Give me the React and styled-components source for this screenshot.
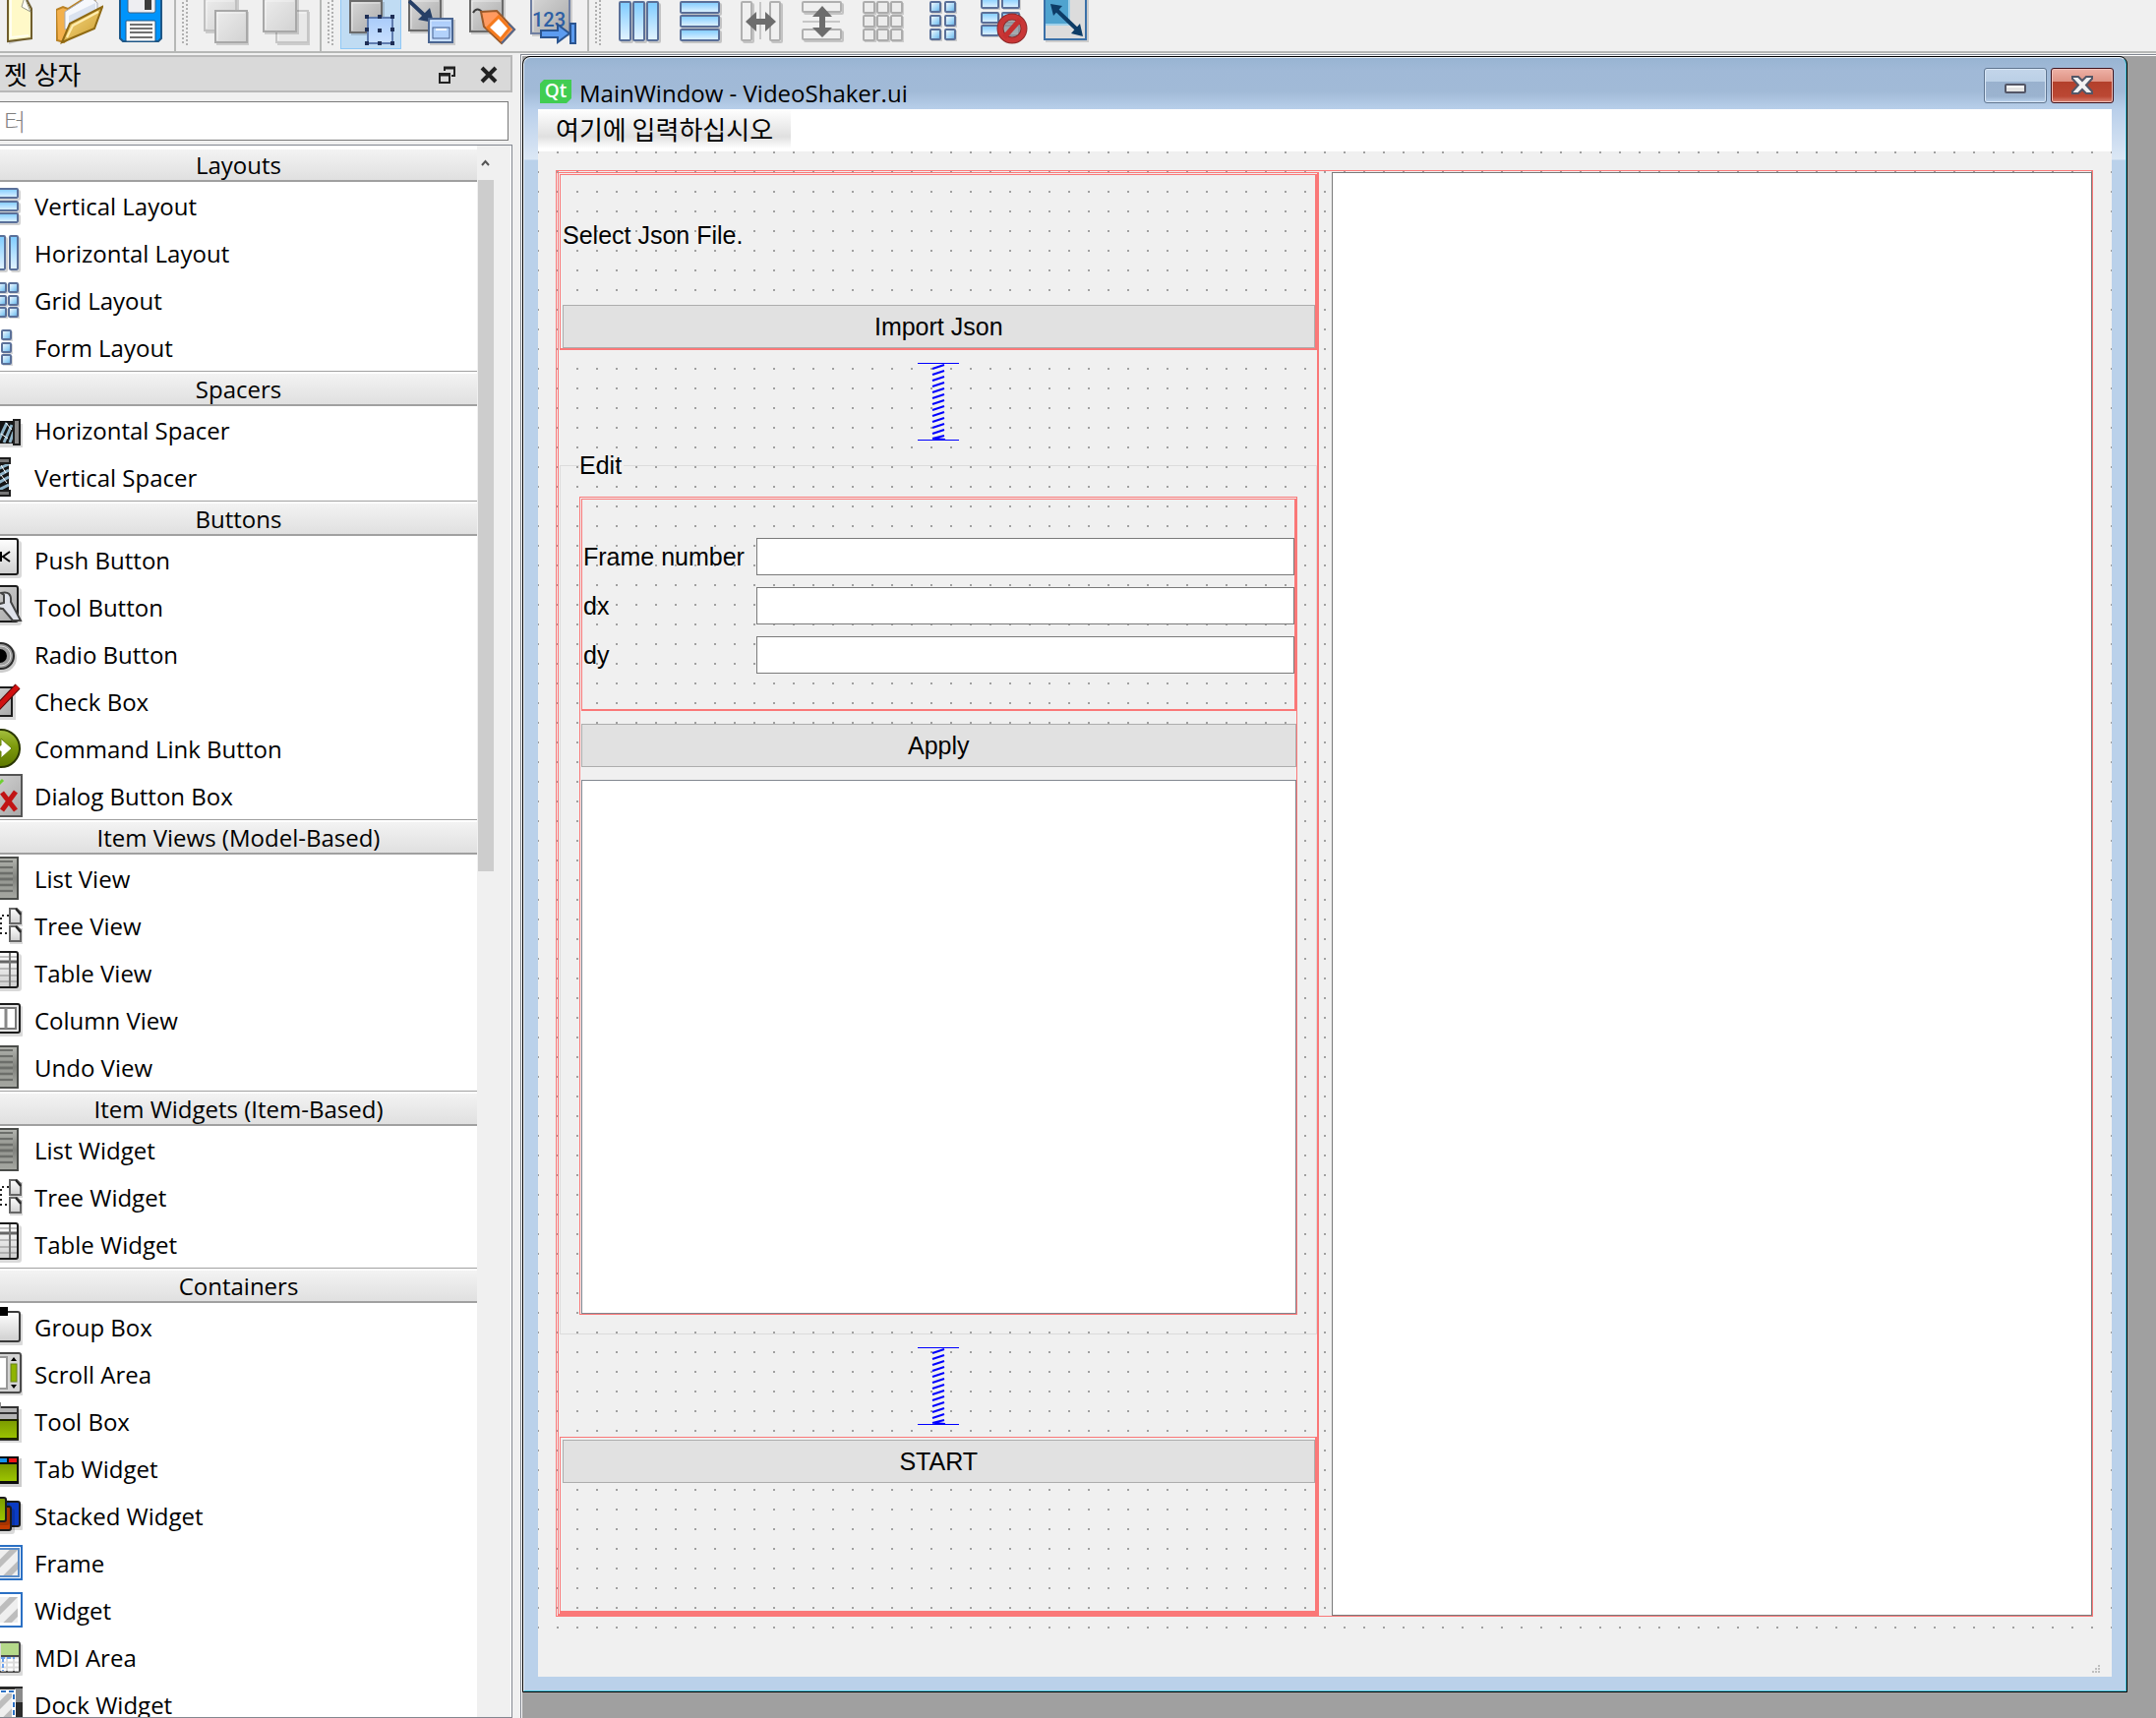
import { Fragment } from 'react';
import styled, { createGlobalStyle } from 'styled-components';

const GlobalStyle = createGlobalStyle`
  * {
    box-sizing: border-box;
  }

  body {
    margin: 0;
    background: #f0f0f0;
    color: #000;
    font-family: 'Open Sans', 'Noto Sans CJK KR', sans-serif;
    font-size: 24px;
    line-height: 32px;
  }
`;

const red = '#fa7878';

const Designer = styled.div`
  display: flex;
  flex-direction: column;
  height: 100vh;
  overflow: hidden;
`;

/* ---------- toolbar ---------- */

const ToolBars = styled.header`
  display: flex;
  flex: none;
`;

const ToolBar = styled.div`
  display: flex;
  align-items: flex-start;
  flex: ${props => (props.$grow ? '1' : 'none')};
  justify-content: ${props => (props.$clipped ? 'flex-end' : 'flex-start')};
  width: ${props => (props.$clipped ? '179px' : 'auto')};
  height: 54px;
  padding: 0 3px 0 ${props => (props.$clipped ? '0' : '6px')};
  overflow: hidden;
  border-right: ${props => (props.$grow ? 'none' : '2px solid #b6b8b6')};
  border-bottom: 2px solid #b6b8b6;
  background: #f0f0f0;
`;

const Grip = styled.span`
  flex: none;
  width: 6px;
  height: 46px;
  margin-right: 7px;
  background-image:
    conic-gradient(from 270deg at 2px 2px, #b0b0b0 90deg, transparent 0),
    conic-gradient(from 270deg at 2px 2px, #b0b0b0 90deg, transparent 0);
  background-size: 6px 4px;
  background-position: 0 2px, 4px 0;
`;

const ToolButton = styled.button`
  display: flex;
  justify-content: center;
  flex: none;
  width: 62px;
  height: 50px;
  padding: 0;
  border: 1px solid ${props => (props.$active ? '#90c8f6' : 'transparent')};
  border-top: none;
  background: ${props => (props.$active ? '#c0dcf3' : 'transparent')};
`;

/* ---------- widget box ---------- */

const Body = styled.div`
  display: flex;
  flex: 1;
  min-height: 0;
`;

const Dock = styled.aside`
  display: flex;
  flex-direction: column;
  flex: none;
  width: 521px;
  margin-right: 8px;
  padding-top: 2px;
`;

const DockTitle = styled.div`
  display: flex;
  align-items: center;
  flex: none;
  height: 38px;
  padding: 2px 13px 0 4px;
  border: 2px solid #b8b8b8;
  border-left: none;
  background: #d9d9d9;
  font-size: 26px;
  font-weight: 400;

  h2 {
    flex: 1;
    margin: 0;
    font: inherit;
  }

  button {
    display: flex;
    margin-left: 24px;
    padding: 0;
    border: none;
    background: none;
  }
`;

const Filter = styled.input`
  flex: none;
  width: 517px;
  height: 40px;
  margin: 9px 0 4px;
  padding: 0 4px 2px;
  border: 1px solid #7a7a7a;
  border-left: none;
  background: #fff;
  font-family: 'Noto Sans CJK KR', sans-serif;
  font-size: 24px;
  font-weight: 300;

  &::placeholder {
    color: #7f7f7f;
    opacity: 1;
  }
`;

const Tree = styled.div`
  display: flex;
  flex: 1;
  min-height: 0;
  border: 1px solid #828790;
  border-left: none;
  background: #fff;
`;

const TreeList = styled.div`
  flex: 1;
  overflow: hidden;
  padding-top: 1px;
`;

const Category = styled.h3`
  height: 36px;
  margin: 0;
  padding-top: 3px;
  border-top: 1px solid #a0a0a0;
  border-bottom: 2px solid #a0a0a0;
  background: linear-gradient(#f4f4f4, #e0e0e0);
  box-shadow: inset 0 2px #fff;
  font-size: 24px;
  font-weight: 400;
  line-height: 30px;
  text-align: center;

  &:first-child {
    border-top-color: #fff;
  }
`;

const Items = styled.ul`
  margin: 0;
  padding: 0;
  list-style: none;
`;

const Item = styled.li`
  display: flex;
  align-items: center;
  gap: 12px;
  height: 48px;

  svg {
    flex: none;
  }

  span {
    padding-top: 2px;
  }
`;

const ScrollBar = styled.div`
  display: flex;
  flex-direction: column;
  flex: none;
  width: 35px;
  border-right: 1px solid #fff;
  background: #f0f0f0;

  svg {
    flex: none;
    margin: 14px 4px 13px;
  }
`;

const Thumb = styled.div`
  width: 16px;
  height: 44%;
  margin-left: 1px;
  background: #cdcdcd;
`;

/* ---------- form window ---------- */

const MdiArea = styled.main`
  display: flex;
  flex: 1;
  margin-top: 1px;
  padding: 1px 29px 26px 1px;
  border: 1px solid #828790;
  border-width: 1px 0 0 1px;
  background: #a0a0a0;
  box-shadow: inset 1px 1px #fff;
`;

const FormWindow = styled.section`
  display: flex;
  flex: 1;
  border: 1px solid #000;
  border-radius: 8px 8px 0 0;
  background: #000;
`;

const Frame = styled.div`
  display: flex;
  flex-direction: column;
  flex: 1;
  padding: 0 14px 14px;
  border: 1px solid;
  border-color: #eaf3fb #44c3da #44c3da #eaf3fb;
  border-radius: 7px 7px 0 0;
  background: linear-gradient(
    #98b4d2 0, #a0b9d7 12px, #a1bad7 34px, #b8cfea 52px,
    #b9cfea 52px, #dbe7f5 103px, #bad1ea 104px
  );
`;

const TitleBar = styled.div`
  display: flex;
  align-items: flex-end;
  height: 52px;
  padding-left: 2px;

  > svg {
    margin-bottom: 6px;
  }

  h1 {
    flex: 1;
    margin: 0;
    padding-left: 8px;
    font-size: 24px;
    font-weight: 400;
    line-height: 32px;
  }
`;

const CaptionButtons = styled.div`
  display: flex;
  gap: 4px;
  align-self: flex-start;
  margin-right: -2px;
  padding-top: 10px;
`;

const CaptionButton = styled.button`
  display: flex;
  align-items: center;
  justify-content: center;
  width: 64px;
  height: 36px;
  padding: 0;
  border: 1px solid ${props => (props.$close ? '#40121c' : '#5f7590')};
  border-radius: 3px;
  background: ${props =>
    props.$close
      ? 'linear-gradient(#eeb2a7 0, #de9283 13px, #b3402b 13px, #bb4733 28px, #d98272 34px)'
      : 'linear-gradient(#c3d5ea 0, #bbd0e6 13px, #99b1ce 13px, #9bb3cf 28px, #bcd3ee 34px)'};
  box-shadow: inset 0 0 0 1px ${props => (props.$close ? '#f0c0b8' : '#d9e7f6')};
`;

const MenuBar = styled.nav`
  display: flex;
  flex: none;
  height: 43px;
  background: #fff;
`;

const MenuItem = styled.button`
  height: 40px;
  padding: 0 18px;
  border: none;
  background: linear-gradient(#fff 0, #e0e0e0 28px, #fff 40px);
  font-family: 'Noto Sans CJK KR', sans-serif;
  font-size: 26px;
  line-height: 40px;
`;

const Client = styled.div`
  display: flex;
  flex-direction: column;
  flex: 1;
  background: #f0f0f0;
`;

const Central = styled.div`
  display: flex;
  flex: 1;
  padding: 19px 19px 16px 18px;
  background-image: conic-gradient(from 270deg at 2px 2px, #a0a0a0 90deg, transparent 0);
  background-size: 20px 20px;
  background-position: -1px 0;
`;

const StatusBar = styled.div`
  display: flex;
  align-items: flex-end;
  justify-content: flex-end;
  flex: none;
  height: 45px;
  padding: 0 12px 4px;
  background: #f0f0f0;
`;

const Columns = styled.div`
  display: grid;
  grid-template-columns: 1fr 1fr;
  gap: 13px;
  flex: 1;
  padding: 1px 0 0 1px;
  border: 1px solid ${red};
`;

const GraphicsView = styled.div`
  border: 1px solid #7a7a7a;
  background: #fff;
`;

const FormFont = styled.div`
  display: flex;
  flex-direction: column;
  gap: 12px;
  padding: 1px 0 0 1px;
  border: 1px solid ${red};
  border-width: 1px 2px 2px 1px;
  font-family: 'Liberation Sans', sans-serif;
  font-size: 25px;
  line-height: 26px;
`;

const VBox = styled.div`
  display: flex;
  flex-direction: column;
  gap: 12px;
  height: ${props => props.$height};
  padding: 2px 0 0 2px;
  border: 1px solid ${red};
  border-width: 1px 2px ${props => props.$bottom || '2px'} 1px;
`;

const Label = styled.div`
  display: flex;
  align-items: center;
  flex: 1;
`;

const PushButton = styled.button`
  flex: none;
  height: 44px;
  padding: 0;
  border: 1px solid #adadad;
  background: #e1e1e1;
  color: #000;
  font: inherit;
`;

const SpacerBox = styled.div`
  display: flex;
  justify-content: center;
  height: 80px;
`;

const GroupBox = styled.fieldset`
  display: flex;
  flex: 1;
  min-width: 0;
  margin: 0;
  padding: 19px;
  border: 1px solid #dcdcdc;

  legend {
    padding: 0 2px 0 0;
  }
`;

const GroupLayout = styled.div`
  display: flex;
  flex-direction: column;
  gap: 13px;
  flex: 1;
  padding: 1px 0 0 1px;
  border: 1px solid ${red};
`;

const FormLayout = styled.div`
  display: grid;
  grid-template-columns: 164px 1fr;
  gap: 12px;
  align-items: center;
  padding: 39px 0 36px 1px;
  border: 1px solid ${red};
  border-width: 1px 2px 2px 1px;
`;

const LineEdit = styled.input`
  width: 100%;
  height: 38px;
  padding: 0 6px;
  border: 1px solid #7a7a7a;
  background: #fff;
  font: inherit;
`;

const TextEdit = styled.textarea`
  display: block;
  flex: 1;
  border: 1px solid #828790;
  background: #fff;
  resize: none;
  outline: none;
  font: inherit;
`;

/* ---------- icons ---------- */

const HiddenSvg = styled.svg`
  position: absolute;
`;

const Gradients = () => (
  <HiddenSvg width="0" height="0" aria-hidden="true">
    <defs>
      <linearGradient id="bar" x1="0" y1="0" x2="0" y2="1">
        <stop offset="0" stopColor="#7ecbff" />
        <stop offset="1" stopColor="#e4f4ff" />
      </linearGradient>
      <linearGradient id="cell" x1="0" y1="0" x2="1" y2="1">
        <stop offset="0" stopColor="#fff" />
        <stop offset="0.7" stopColor="#8fcdf5" />
        <stop offset="1" stopColor="#5f9dcb" />
      </linearGradient>
      <linearGradient id="grey" x1="0" y1="0" x2="1" y2="1">
        <stop offset="0" stopColor="#d8d8d8" />
        <stop offset="1" stopColor="#a9a9a9" />
      </linearGradient>
      <linearGradient id="pale" x1="0" y1="0" x2="1" y2="1">
        <stop offset="0" stopColor="#ececec" />
        <stop offset="1" stopColor="#d2d2d2" />
      </linearGradient>
      <linearGradient id="white" x1="0" y1="0" x2="0" y2="1">
        <stop offset="0" stopColor="#fff" />
        <stop offset="1" stopColor="#cfcfcf" />
      </linearGradient>
      <linearGradient id="blue" x1="0" y1="0" x2="0" y2="1">
        <stop offset="0" stopColor="#a9cbfa" />
        <stop offset="1" stopColor="#c9e0ff" />
      </linearGradient>
      <linearGradient id="green" x1="0" y1="0" x2="0" y2="1">
        <stop offset="0" stopColor="#7b9a00" />
        <stop offset="1" stopColor="#9cc400" />
      </linearGradient>
      <linearGradient id="olive" x1="0" y1="0" x2="0" y2="1">
        <stop offset="0" stopColor="#a5c040" />
        <stop offset="0.45" stopColor="#7d9a0c" />
        <stop offset="1" stopColor="#5d7800" />
      </linearGradient>
      <linearGradient id="folder" x1="0" y1="0" x2="1" y2="1">
        <stop offset="0" stopColor="#fbe08a" />
        <stop offset="1" stopColor="#c9982a" />
      </linearGradient>
      <linearGradient id="list" x1="0" y1="0" x2="0" y2="1">
        <stop offset="0" stopColor="#b4b6b0" />
        <stop offset="0.5" stopColor="#80827d" />
        <stop offset="1" stopColor="#a8aaa4" />
      </linearGradient>
      <pattern id="hatch" width="14" height="14" patternUnits="userSpaceOnUse" patternTransform="rotate(45)">
        <rect width="14" height="14" fill="#efefef" />
        <rect width="6" height="14" fill="#bdbdbd" />
      </pattern>
    </defs>
  </HiddenSvg>
);

const Bars = ({ vertical, tops, from, length, size, fill = 'url(#bar)', stroke = '#5a7099' }) =>
  tops.map(t => {
    const box = vertical
      ? { x: t + 1, y: from + 1, width: size - 2, height: length - 2 }
      : { x: from + 1, y: t + 1, width: length - 2, height: size - 2 };
    return (
      <g key={t}>
        <rect {...box} x={box.x + 2} y={box.y + 2} rx="1" fill="none" stroke="#000" strokeOpacity="0.18" strokeWidth="2" />
        <rect {...box} rx="1" fill={fill} stroke={stroke} strokeWidth="2" />
      </g>
    );
  });

const Cells = ({ xs, ys, w, h, fill = 'url(#cell)', stroke = '#5a7099' }) =>
  ys.map(y =>
    xs.map(x => (
      <g key={`${x}-${y}`}>
        <rect x={x + 2} y={y + 2} width={w - 1} height={h - 1} fill="#000" fillOpacity="0.15" />
        <rect x={x + 1} y={y + 1} width={w - 2} height={h - 2} rx="1" fill={fill} stroke={stroke} strokeWidth="2" />
      </g>
    ))
  );

const Square = ({ x, y, s, fill = 'url(#grey)', stroke = '#6b6b6b' }) => (
  <>
    <rect x={x + 2} y={y + 2} width={s} height={s} fill="#000" fillOpacity="0.15" />
    <rect x={x + 1} y={y + 1} width={s - 2} height={s - 2} fill={fill} stroke={stroke} strokeWidth="2" />
    <path d={`M${x + 3} ${y + s - 3}V${y + 3}H${x + s - 3}`} fill="none" stroke="#fff" strokeOpacity="0.6" />
  </>
);

const toolIcons = {
  newFile: (
    <>
      <path d="M14 -4H32L38 8V38L14 45Z" fill="#000" fillOpacity="0.15" />
      <path d="M13 -4H30L37 9V39L13 42Z" fill="#fff9c8" stroke="#6f5d2c" strokeWidth="2" />
      <path d="M30 -3L27 7L36 12Z" fill="#fdfdf5" stroke="#9a9a88" />
      <path d="M16 0V38L34 36" fill="none" stroke="#fffef0" strokeWidth="2" />
    </>
  ),
  open: (
    <>
      <path d="M1 41L0 10L7 7L12 9L36 -6L40 2V20L8 43Z" fill="#f3b04c" stroke="#b98226" strokeWidth="2" />
      <path d="M9 30V12L34 -4L42 3V20Z" fill="#f6f8fc" stroke="#a5a9b5" />
      <path d="M13 28V16L40 3V14Z" fill="#dbe3f0" />
      <path d="M6 43L14 24L47 7L39 29Z" fill="url(#folder)" stroke="#8f6a14" strokeWidth="2" />
      <path d="M11 38L17 26L43 12" fill="none" stroke="#ffedb0" strokeWidth="2" />
    </>
  ),
  save: (
    <>
      <path d="M3 -4H45V39L42 42H6L3 39Z" fill="#0094fb" stroke="#1e5787" strokeWidth="2" />
      <path d="M11 -4H39V11Q39 13 37 13H13Q11 13 11 11Z" fill="#eeeef2" stroke="#3a6387" />
      <rect x="28" y="-2" width="7" height="12" fill="#3c3c3c" />
      <rect x="9" y="21" width="30" height="21" rx="1" fill="#fbfbfb" stroke="#1e5787" />
      <path d="M13 25H36M13 29H36M13 33H36M13 38H36" stroke="#707070" strokeWidth="2" />
    </>
  ),
  sendBack: (
    <>
      <Square x={2} y={-2} s={34} fill="url(#pale)" stroke="#c0c0c0" />
      <Square x={13} y={10} s={34} fill="url(#pale)" stroke="#a8a8a8" />
    </>
  ),
  bringFront: (
    <>
      <Square x={13} y={10} s={34} fill="#e8e8e8" stroke="#c6c6c6" />
      <Square x={0} y={-2} s={35} fill="url(#pale)" stroke="#a8a8a8" />
    </>
  ),
  editWidgets: (
    <>
      <Square x={2} y={0} s={34} />
      <rect x="21" y="18" width="25" height="26" fill="url(#blue)" stroke="#5f7cae" strokeWidth="2" />
      {[[18, 15], [31, 15], [44, 15], [18, 28], [44, 28], [18, 42], [31, 42], [44, 42], [31, 29]].map(([x, y]) => (
        <rect key={`${x}-${y}`} x={x} y={y} width="4" height="4" fill="#1f2f55" />
      ))}
    </>
  ),
  editSignals: (
    <>
      <Square x={0} y={-2} s={34} />
      <path d="M1 1L17 16" stroke="#263f66" strokeWidth="4" />
      <path d="M26 23L10 20L22 8Z" fill="#263f66" />
      <Square x={20} y={18} s={26} fill="url(#blue)" stroke="#4a6591" />
      <rect x="25" y="28" width="17" height="11" fill="#b3d2fb" stroke="#4a6591" />
      <path d="M28 30H39" stroke="#fff" strokeWidth="2" />
    </>
  ),
  editBuddies: (
    <>
      <Square x={0} y={-2} s={35} />
      <path d="M4 13Q8 6 14 13" fill="none" stroke="#3c3c3c" strokeWidth="2" />
      <path d="M12 12L28 11L46 30L33 44L15 27Z" fill="#ff9a60" stroke="#9a5a2a" strokeWidth="2" />
      <path d="M33 44L46 30L40 24" fill="none" stroke="#566a8f" strokeWidth="2" />
      <path d="M30 17L41 29L32 40L19 28Z" fill="#fff" stroke="#f57a1d" strokeWidth="3" />
    </>
  ),
  tabOrder: (
    <>
      <Square x={0} y={-6} s={41} fill="url(#grey)" stroke="#6f7fa2" />
      <text x="2" y="27" fontFamily="Roboto, sans-serif" fontSize="20" fontWeight="500" fill="#2d5fa4">
        123
      </text>
      <path d="M11 31H28V25L40 34L28 43V38H11Z" fill="#5c9cf0" stroke="#2b5590" strokeWidth="2" />
      <rect x="41" y="24" width="5" height="20" fill="#5c9cf0" stroke="#2b5590" strokeWidth="2" />
    </>
  ),
  layoutH: <Bars vertical tops={[4, 18, 32]} from={1} length={41} size={13} />,
  layoutV: <Bars tops={[1, 15, 29]} from={4} length={41} size={13} />,
  splitH: (
    <>
      <Bars vertical tops={[4, 33]} from={1} length={41} size={12} fill="#f0f0f0" stroke="#b0b0b0" />
      <path d="M24 2V40" stroke="#c6c6c6" strokeWidth="2" />
      <path d="M9 22L20 12V19H29V12L40 22L29 32V25H20V32Z" fill="#6d6d6d" />
    </>
  ),
  splitV: (
    <>
      <Bars tops={[1, 29]} from={4} length={41} size={12} fill="#f0f0f0" stroke="#b0b0b0" />
      <path d="M5 22H43" stroke="#c6c6c6" strokeWidth="2" />
      <path d="M25 6L35 17H28V28H35L25 38L15 28H22V17H15Z" fill="#6d6d6d" />
    </>
  ),
  grid: <Cells xs={[4, 18, 32]} ys={[1, 15, 29]} w={13} h={13} fill="#ececec" stroke="#acacac" />,
  form: <Cells xs={[10, 25]} ys={[1, 15, 29]} w={12} h={12} />,
  breakLayout: (
    <>
      <Cells xs={[0, 21]} ys={[-3, 12, 25]} w={19} h={12} fill="url(#bar)" />
      <circle cx="32" cy="29" r="12" fill="#9b9b9b" fillOpacity="0.8" stroke="#8c2a2a" strokeWidth="7" />
      <circle cx="32" cy="29" r="12" fill="none" stroke="#c93636" strokeWidth="5" />
      <path d="M24 38L40 20" stroke="#c53030" strokeWidth="5" />
    </>
  ),
  adjustSize: (
    <>
      <rect x="4" y="-4" width="44" height="47" fill="#000" fillOpacity="0.15" />
      <rect x="3" y="-4" width="42" height="44" fill="#dcdcdc" stroke="#3a70a8" strokeWidth="2" />
      <path d="M4 -4H28V25H4Z" fill="#4fa3cf" />
      <path d="M4 25H28V-4" fill="none" stroke="#9fd0ea" strokeWidth="2" />
      <path d="M14 9L36 30" stroke="#0d3c66" strokeWidth="4" />
      <path d="M9 4L21 6L12 16Z" fill="#0d3c66" />
      <path d="M42 37L30 34L39 24Z" fill="#0d3c66" />
    </>
  ),
};

const ToolIcon = ({ name }) => (
  <svg width="48" height="46" viewBox="0 0 48 46" aria-hidden="true">
    {toolIcons[name]}
  </svg>
);

const Slab = ({ x = 0, y, r, b, fill = 'url(#white)', stroke = '#1c1c1c' }) => (
  <>
    <rect x={x} y={y + 3} width={r - x + 3} height={b - y} rx="3" fill="#000" fillOpacity="0.15" />
    <rect x={x} y={y + 1} width={r - x - 1} height={b - y - 2} rx="2" fill={fill} stroke={stroke} strokeWidth="2" />
  </>
);

const listIcon = (
  <>
    <rect x="1" y="1" width="38" height="42" fill="url(#list)" stroke="#4b4d4a" strokeWidth="2" />
    <path d="M4 5H34M4 11H34M4 17H34M4 23H34M4 29H34M4 35H34" stroke="#6c6e6a" strokeWidth="2" />
    <path d="M4 8H34M4 14H34M4 20H34M4 26H34M4 32H34M4 38H34" stroke="#a6a8a2" strokeWidth="1" />
  </>
);

const treeIcon = (
  <>
    <path d="M30 12H22V30H30" fill="none" stroke="#222" strokeWidth="2" strokeDasharray="2 3" />
    {[4, 22].map(y => (
      <g key={y}>
        <rect x="31" y={y + 3} width="14" height="16" fill="#000" fillOpacity="0.15" />
        <path d={`M31 ${y + 1}H38L42 ${y + 5}V${y + 16}H31Z`} fill="url(#white)" stroke="#666" strokeWidth="2" />
        <path d={`M37 ${y + 1}L42 ${y + 7}`} stroke="#222" strokeWidth="2" />
      </g>
    ))}
  </>
);

const tableIcon = (
  <>
    <Slab y={0} r={40} b={38} />
    <path d="M2 11H38" stroke="#666" strokeWidth="3" />
    <path d="M2 6H38M2 18H38M2 25H38M2 31H38" stroke="#888" strokeWidth="1" />
    <path d="M31 2V36" stroke="#777" strokeWidth="2" />
  </>
);

const hatchIcon = inner => (
  <>
    <rect x="1" y="5" width="42" height="34" fill="#fff" stroke="#2b70c4" strokeWidth="2" />
    <rect x="4" y="8" width="36" height="28" fill="url(#hatch)" stroke={inner} strokeWidth="2" />
  </>
);

const itemIcons = {
  vlayout: <Bars tops={[4, 17, 29]} from={4} length={36} size={11} />,
  hlayout: <Bars vertical tops={[4, 17, 30]} from={4} length={36} size={10} />,
  gridlayout: <Cells xs={[4, 17, 29]} ys={[4, 17, 29]} w={11} h={11} />,
  formlayout: <Cells xs={[9, 22]} ys={[4, 17, 29]} w={11} h={11} />,
  hspacer: (
    <>
      <rect x="14" y="16" width="30" height="24" fill="#000" fillOpacity="0.15" />
      <rect x="10" y="13" width="25" height="23" fill="#141414" />
      <path d="M19 34L28 15M25 35L33 17M31 35L35 24" stroke="#8fb4c8" strokeWidth="3" />
      <path d="M22 26L29 31M27 15L33 22" stroke="#fff" strokeWidth="1" />
      <rect x="35" y="12" width="6" height="25" fill="#8a8a8a" stroke="#1e1e1e" strokeWidth="2" />
    </>
  ),
  vspacer: (
    <>
      <rect x="10" y="8" width="20" height="28" fill="#141414" />
      <path d="M14 16L30 9M14 24L30 15M14 31L30 22M18 36L30 30" stroke="#8fb4c8" strokeWidth="3" />
      <path d="M22 10L27 18M22 20L28 28" stroke="#fff" strokeWidth="1" />
      <rect x="8" y="3" width="23" height="5" fill="#777" stroke="#1e1e1e" strokeWidth="2" />
      <rect x="8" y="36" width="23" height="5" fill="#777" stroke="#1e1e1e" strokeWidth="2" />
    </>
  ),
  push: (
    <>
      <Slab y={0} r={40} b={38} />
      <path d="M22 14V24M31 14L24 19L31 24" fill="none" stroke="#000" strokeWidth="2" />
    </>
  ),
  tool: (
    <>
      <Slab y={0} r={40} b={38} fill="url(#grey)" />
      <path d="M22 8Q33 5 32 17L42 36L34 36L24 24Q19 24 16 20L25 18V10Z" fill="#dfe2ea" stroke="#444" strokeWidth="2" />
    </>
  ),
  radio: (
    <>
      <circle cx="23" cy="26" r="15" fill="#000" fillOpacity="0.2" />
      <circle cx="22" cy="24" r="13" fill="#9a9a9a" stroke="#2c2c2c" strokeWidth="2" />
      <circle cx="22" cy="24" r="10" fill="none" stroke="#ddd" />
      <circle cx="21" cy="24" r="7" fill="#000" />
    </>
  ),
  check: (
    <>
      <rect x="8" y="10" width="29" height="31" fill="#000" fillOpacity="0.15" />
      <rect x="8" y="8" width="25" height="29" fill="url(#grey)" stroke="#1e1e1e" strokeWidth="2" />
      <path d="M12 20L19 28L39 7" fill="none" stroke="#5a0a0a" strokeWidth="7" />
      <path d="M12 20L19 28L39 7" fill="none" stroke="#d01010" strokeWidth="5" />
    </>
  ),
  command: (
    <>
      <circle cx="22" cy="22" r="19" fill="url(#olive)" stroke="#2a3600" strokeWidth="2" />
      <path d="M12 19H22V12L33 22L22 32V25H12" fill="#fff" stroke="#66820a" />
    </>
  ),
  dialog: (
    <>
      <rect x="1" y="1" width="42" height="42" fill="url(#grey)" stroke="#555" strokeWidth="2" />
      <path d="M18 12L24 6" stroke="#6fd030" strokeWidth="3" />
      <path d="M23 19L37 37M37 18L23 37" stroke="#c11414" strokeWidth="5" />
    </>
  ),
  list: listIcon,
  tree: treeIcon,
  table: tableIcon,
  column: (
    <>
      <Slab y={5} r={42} b={36} fill="#e4e4e4" />
      <rect x="10" y="10" width="27" height="21" fill="#fff" stroke="#777" strokeWidth="2" />
      <path d="M27 10V31" stroke="#888" strokeWidth="3" />
    </>
  ),
  group: (
    <>
      <Slab y={6} r={42} b={38} stroke="#3a3a3a" />
      <rect x="8" y="2" width="21" height="9" fill="#000" />
    </>
  ),
  scroll: (
    <>
      <Slab y={0} r={43} b={42} fill="#d4d4d4" stroke="#4a4a4a" />
      <rect x="3" y="5" width="25" height="32" fill="#fff" stroke="#999" strokeWidth="2" />
      <path d="M35 5L38 9H32ZM35 37L38 33H32Z" fill="#000" />
      <rect x="32" y="12" width="6" height="18" fill="#8fb400" stroke="#66801a" />
    </>
  ),
  toolbox: (
    <>
      <rect x="3" y="10" width="40" height="35" fill="#000" fillOpacity="0.15" />
      <rect x="0" y="8" width="39" height="33" fill="#b5b5b5" stroke="#333" strokeWidth="2" />
      <rect x="0" y="3" width="22" height="6" fill="#888" />
      <path d="M0 14H38" stroke="#333" strokeWidth="2" />
      <rect x="0" y="21" width="39" height="19" fill="url(#green)" stroke="#1d2400" strokeWidth="2" />
    </>
  ),
  tab: (
    <>
      <rect x="3" y="12" width="40" height="29" fill="#000" fillOpacity="0.2" />
      <rect x="0" y="10" width="40" height="28" fill="#0c0c0c" />
      <rect x="14" y="12" width="14" height="4" fill="#1493f0" />
      <rect x="30" y="12" width="8" height="4" fill="#ee1414" />
      <rect x="0" y="18" width="38" height="17" fill="url(#green)" />
    </>
  ),
  stacked: (
    <>
      <Slab x={20} y={7} r={42} b={34} fill="#0b3cc4" />
      <Slab x={12} y={12} r={33} b={38} fill="#c23c00" />
      <Slab x={4} y={3} r={28} b={29} fill="url(#green)" />
    </>
  ),
  frame: hatchIcon('#5a8cc8'),
  widget: hatchIcon('#fff'),
  mdi: (
    <>
      <Slab y={6} r={42} b={38} fill="#dcdcdc" stroke="#4a4a4a" />
      <rect x="22" y="8" width="18" height="12" fill="#b5d98a" />
      <path d="M22 21H40" stroke="#4a4a4a" strokeWidth="2" />
      <path d="M22 25H40M22 30H40M22 35H40" stroke="#fff" strokeWidth="3" strokeDasharray="5 2" />
      <path d="M22 23H36M24 23V36" stroke="#6aa0ee" strokeWidth="2" strokeDasharray="4 2" />
    </>
  ),
  dock: (
    <>
      <rect x="0" y="4" width="44" height="40" fill="#2a2a2a" />
      <rect x="36" y="6" width="8" height="14" fill="#8a8a8a" />
      <rect x="6" y="9" width="29" height="40" fill="url(#hatch)" stroke="#fff" strokeWidth="4" />
      <rect x="6" y="9" width="29" height="40" fill="none" stroke="#2b70c4" strokeWidth="2" strokeDasharray="5 3" />
    </>
  ),
};

// the list is scrolled sideways, so only the right part of each icon shows
const ItemIcon = ({ name }) => (
  <svg width="23" height="44" viewBox="21 0 23 44" aria-hidden="true">
    {itemIcons[name]}
  </svg>
);

const coil = Array.from({ length: 12 }, (_, i) => 7 + i * 6);

const VerticalSpacer = () => (
  <SpacerBox>
    <svg width="42" height="80" viewBox="0 0 42 80" aria-hidden="true">
      <path d="M0 1.5H42M0 79.5H42" stroke="#00f" shapeRendering="crispEdges" />
      {coil.map(y => (
        <path key={y} d={`M15 ${y}L27 ${y - 4}`} stroke="#00f" strokeWidth="2" />
      ))}
      <path d="M15 78L27 75M17 78L28 79" stroke="#00f" strokeWidth="2" />
    </svg>
  </SpacerBox>
);

/* ---------- data ---------- */

const toolBars = [
  [
    ['newFile', 'New'],
    ['open', 'Open'],
    ['save', 'Save'],
  ],
  [
    ['sendBack', 'Send to Back'],
    ['bringFront', 'Bring to Front'],
  ],
  [
    ['editWidgets', 'Edit Widgets'],
    ['editSignals', 'Edit Signals/Slots'],
    ['editBuddies', 'Edit Buddies'],
    ['tabOrder', 'Edit Tab Order'],
  ],
  [
    ['layoutH', 'Lay Out Horizontally'],
    ['layoutV', 'Lay Out Vertically'],
    ['splitH', 'Lay Out Horizontally in Splitter'],
    ['splitV', 'Lay Out Vertically in Splitter'],
    ['grid', 'Lay Out in a Grid'],
    ['form', 'Lay Out in a Form Layout'],
    ['breakLayout', 'Break Layout'],
    ['adjustSize', 'Adjust Size'],
  ],
];

const categories = [
  {
    title: 'Layouts',
    items: [
      ['vlayout', 'Vertical Layout'],
      ['hlayout', 'Horizontal Layout'],
      ['gridlayout', 'Grid Layout'],
      ['formlayout', 'Form Layout'],
    ],
  },
  {
    title: 'Spacers',
    items: [
      ['hspacer', 'Horizontal Spacer'],
      ['vspacer', 'Vertical Spacer'],
    ],
  },
  {
    title: 'Buttons',
    items: [
      ['push', 'Push Button'],
      ['tool', 'Tool Button'],
      ['radio', 'Radio Button'],
      ['check', 'Check Box'],
      ['command', 'Command Link Button'],
      ['dialog', 'Dialog Button Box'],
    ],
  },
  {
    title: 'Item Views (Model-Based)',
    items: [
      ['list', 'List View'],
      ['tree', 'Tree View'],
      ['table', 'Table View'],
      ['column', 'Column View'],
      ['list', 'Undo View'],
    ],
  },
  {
    title: 'Item Widgets (Item-Based)',
    items: [
      ['list', 'List Widget'],
      ['tree', 'Tree Widget'],
      ['table', 'Table Widget'],
    ],
  },
  {
    title: 'Containers',
    items: [
      ['group', 'Group Box'],
      ['scroll', 'Scroll Area'],
      ['toolbox', 'Tool Box'],
      ['tab', 'Tab Widget'],
      ['stacked', 'Stacked Widget'],
      ['frame', 'Frame'],
      ['widget', 'Widget'],
      ['mdi', 'MDI Area'],
      ['dock', 'Dock Widget'],
    ],
  },
];

const fields = [
  ['frame-number', 'Frame number'],
  ['dx', 'dx'],
  ['dy', 'dy'],
];

const WidgetBox = () => (
  <Dock>
    <DockTitle>
      <h2>젯 상자</h2>
      <button aria-label="Float">
        <svg width="18" height="18" viewBox="0 0 18 18">
          <path d="M6 5V2H16V10H13" fill="none" stroke="#222" strokeWidth="2" />
          <path d="M5 2H17" stroke="#222" strokeWidth="3" />
          <rect x="1" y="8" width="10" height="9" fill="none" stroke="#222" strokeWidth="2" />
          <path d="M0 9H12" stroke="#222" strokeWidth="3" />
        </svg>
      </button>
      <button aria-label="Close">
        <svg width="18" height="18" viewBox="0 0 18 18">
          <path d="M2 2L16 16M16 2L2 16" stroke="#222" strokeWidth="4" />
        </svg>
      </button>
    </DockTitle>
    <Filter aria-label="Filter" placeholder="터" />
    <Tree>
      <TreeList>
        {categories.map(category => (
          <Fragment key={category.title}>
            <Category>{category.title}</Category>
            <Items>
              {category.items.map(([icon, label]) => (
                <Item key={label}>
                  <ItemIcon name={icon} />
                  <span>{label}</span>
                </Item>
              ))}
            </Items>
          </Fragment>
        ))}
      </TreeList>
      <ScrollBar>
        <svg width="9" height="8" viewBox="0 0 9 8">
          <path d="M1 6L4.5 2L8 6" fill="none" stroke="#555" strokeWidth="2" />
        </svg>
        <Thumb />
      </ScrollBar>
    </Tree>
  </Dock>
);

const FormEditor = () => (
  <FormFont>
    <VBox $height="179px">
      <Label>Select Json File.</Label>
      <PushButton>Import Json</PushButton>
    </VBox>
    <VerticalSpacer />
    <GroupBox>
      <legend>Edit</legend>
      <GroupLayout>
        <FormLayout>
          {fields.map(([id, label]) => (
            <Fragment key={id}>
              <label htmlFor={id}>{label}</label>
              <LineEdit id={id} />
            </Fragment>
          ))}
        </FormLayout>
        <PushButton>Apply</PushButton>
        <TextEdit aria-label="Frames" />
      </GroupLayout>
    </GroupBox>
    <VerticalSpacer />
    <VBox $height="180px" $bottom="3px">
      <PushButton>START</PushButton>
    </VBox>
  </FormFont>
);

const App = () => (
  <Designer>
    <GlobalStyle />
    <Gradients />
    <ToolBars>
      {toolBars.map((tools, i) => (
        <ToolBar key={i} $clipped={i === 0} $grow={i === toolBars.length - 1}>
          {i > 0 && <Grip />}
          {tools.map(([icon, label]) => (
            <ToolButton key={icon} aria-label={label} $active={icon === 'editWidgets'}>
              <ToolIcon name={icon} />
            </ToolButton>
          ))}
        </ToolBar>
      ))}
    </ToolBars>

    <Body>
      <WidgetBox />
      <MdiArea>
        <FormWindow>
          <Frame>
            <TitleBar>
              <svg width="32" height="24" viewBox="0 0 32 24" aria-hidden="true">
                <path d="M4 0H32V19L27 24H0V4Z" fill="#41cd52" />
                <text x="16" y="18" textAnchor="middle" fontFamily="Open Sans, sans-serif" fontSize="19" fontWeight="600" fill="#fff">
                  Qt
                </text>
              </svg>
              <h1>MainWindow - VideoShaker.ui</h1>
              <CaptionButtons>
                <CaptionButton aria-label="Minimize">
                  <svg width="22" height="20" viewBox="0 0 22 20">
                    <rect x="1" y="9" width="20" height="8" rx="1" fill="#e4e4e4" stroke="#535666" strokeWidth="2" />
                    <path d="M2 11H20" stroke="#fff" strokeWidth="2" />
                  </svg>
                </CaptionButton>
                <CaptionButton $close aria-label="Close window">
                  <svg width="24" height="20" viewBox="0 0 24 20">
                    <path
                      d="M2 1H8L12 5L16 1H22V3L16 9.500L22 16V18H16L12 14L8 18H2V16L8 9.500L2 3Z"
                      fill="#f2f2f2"
                      stroke="#535666"
                      strokeWidth="2"
                    />
                  </svg>
                </CaptionButton>
              </CaptionButtons>
            </TitleBar>
            <MenuBar>
              <MenuItem>여기에 입력하십시오</MenuItem>
            </MenuBar>
            <Client>
              <Central>
                <Columns>
                  <FormEditor />
                  <GraphicsView />
                </Columns>
              </Central>
              <StatusBar>
                <svg width="8" height="8" viewBox="0 0 8 8" fill="#bfbfbf" aria-hidden="true">
                  <path d="M6 0H8V2H6ZM3 3H5V5H3ZM6 3H8V5H6ZM0 6H2V8H0ZM3 6H5V8H3ZM6 6H8V8H6Z" />
                </svg>
              </StatusBar>
            </Client>
          </Frame>
        </FormWindow>
      </MdiArea>
    </Body>
  </Designer>
);

export default App;
